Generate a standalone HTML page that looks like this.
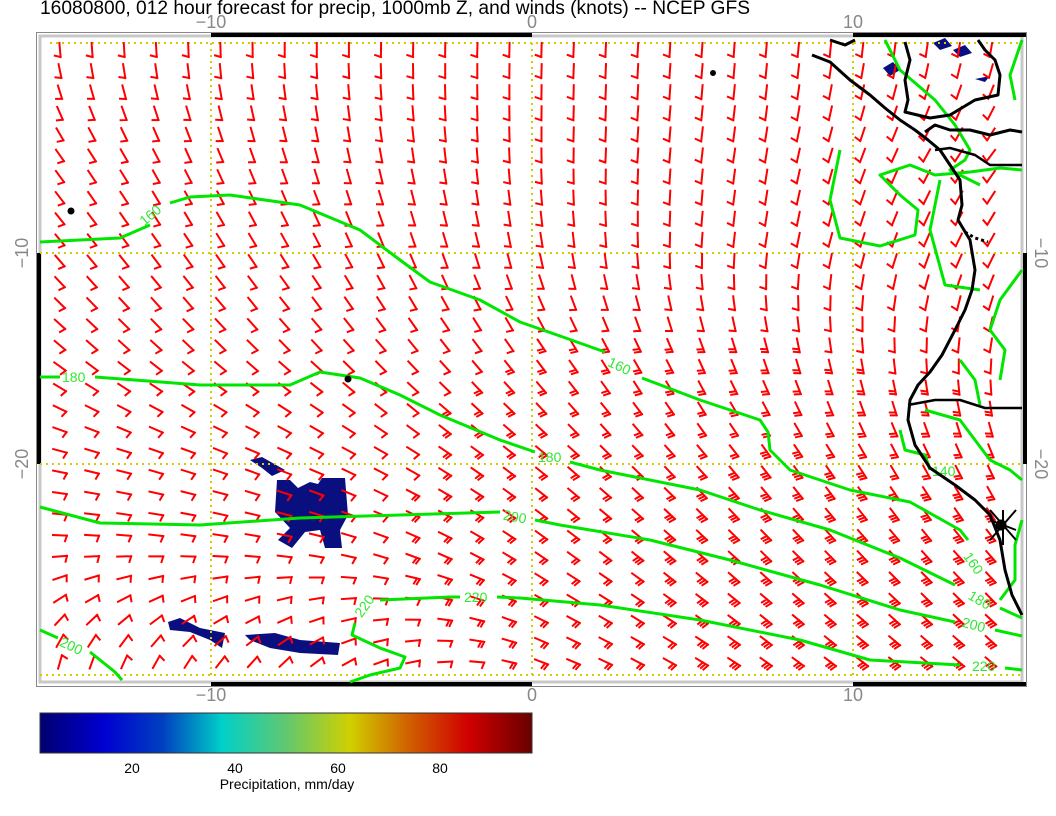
<!DOCTYPE html>
<html><head><meta charset="utf-8"><style>
html,body{margin:0;padding:0;background:#fff;width:1056px;height:816px;overflow:hidden}
svg{display:block}
text{font-family:"Liberation Sans",sans-serif}
</style></head><body>
<svg id="s" width="1056" height="816" viewBox="0 0 1056 816" xmlns="http://www.w3.org/2000/svg">
<defs>
<linearGradient id="cb" x1="0" x2="1" y1="0" y2="0">
<stop offset="0" stop-color="#000070"/>
<stop offset="0.13" stop-color="#0000d0"/>
<stop offset="0.25" stop-color="#0040c0"/>
<stop offset="0.37" stop-color="#00d0c8"/>
<stop offset="0.50" stop-color="#60c870"/>
<stop offset="0.63" stop-color="#d0d000"/>
<stop offset="0.75" stop-color="#d06000"/>
<stop offset="0.87" stop-color="#d00000"/>
<stop offset="1" stop-color="#680000"/>
</linearGradient>
</defs>
<text x="40" y="14" font-size="19" fill="#000" textLength="710" lengthAdjust="spacingAndGlyphs">16080800, 012 hour forecast for precip, 1000mb Z, and winds (knots) -- NCEP GFS</text>
<!-- frame -->
<rect x="36.5" y="32.5" width="990" height="654" fill="none" stroke="#888" stroke-width="1"/>
<rect x="40" y="36" width="982" height="646" fill="none" stroke="#c8c8c8" stroke-width="3"/>
<g fill="#000">
<rect x="211" y="33" width="321" height="4"/><rect x="853" y="33" width="173" height="4"/>
<rect x="211" y="682" width="321" height="4"/><rect x="853" y="682" width="173" height="4"/>
<rect x="37" y="253" width="4" height="211"/><rect x="1023" y="253" width="4" height="211"/>
</g>
<g fill="#888" font-size="18" text-anchor="middle">
<text x="211" y="28">−10</text><text x="532" y="28">0</text><text x="853" y="28">10</text>
<text x="211" y="701">−10</text><text x="532" y="701">0</text><text x="853" y="701">10</text>
<text transform="translate(28,253) rotate(-90)">−10</text>
<text transform="translate(28,464) rotate(-90)">−20</text>
<text transform="translate(1035,253) rotate(90)">−10</text>
<text transform="translate(1035,464) rotate(90)">−20</text>
</g>
<!-- precip -->
<g fill="#0a0f80">
<path d="M250,460 L262,457 L285,470 L272,476 L262,468 Z"/>
<path d="M277,480 L290,480 L298,488 L310,482 L318,484 L322,478 L345,478 L348,515 L340,530 L342,548 L325,548 L320,530 L305,532 L292,548 L278,540 L290,528 L275,512 Z"/>
<path d="M168,622 L180,618 L200,628 L225,633 L222,648 L210,640 L190,632 L170,630 Z"/>
<path d="M245,635 L275,633 L300,640 L340,643 L338,655 L300,653 L270,648 L250,640 Z"/>
<path d="M933,43 L945,38 L952,46 L940,50 Z"/><path d="M953,50 L965,45 L972,53 L960,57 Z"/>
<path d="M883,68 L893,62 L900,70 L890,76 Z"/><path d="M975,79 L990,76 L985,82 Z"/>
</g>
<!-- grid -->
<g stroke="#d4cc00" stroke-width="2" stroke-dasharray="2,4" fill="none">
<line x1="211" y1="43" x2="211" y2="675"/><line x1="532" y1="43" x2="532" y2="675"/><line x1="853" y1="43" x2="853" y2="675"/>
<line x1="50" y1="43" x2="1020" y2="43"/><line x1="40" y1="253" x2="1020" y2="253"/><line x1="40" y1="464" x2="1020" y2="464"/><line x1="40" y1="675" x2="1020" y2="675"/>
</g>
<g id="barbs" stroke="#ff0000" stroke-width="2" fill="none" stroke-linecap="square"></g>
<!-- contours -->
<g stroke="#00e600" stroke-width="3" fill="none" stroke-linejoin="round">
<path d="M40,242 L120,238 L150,225"/>
<path d="M170,203 L190,197 L230,195 L300,205 L360,230 L400,260 L430,282 L480,300 L520,322 L560,336 L605,352"/>
<path d="M642,378 L700,400 L760,420 L768,432 L770,450 L790,470 L850,490 L910,502 L960,530 L968,540"/>
<path d="M40,377 L60,377"/><path d="M95,377 L200,385 L290,385 L320,372 L360,378 L400,395 L440,415 L500,440 L535,452"/>
<path d="M570,462 L600,470 L700,490 L760,510 L830,530 L900,558 L955,585"/>
<path d="M1000,608 L1022,618"/>
<path d="M40,507 L100,523 L200,525 L300,518 L400,515 L500,512"/>
<path d="M535,520 L560,525 L650,540 L730,560 L820,585 L900,610 L955,622"/>
<path d="M995,630 L1022,636"/>
<path d="M380,600 L450,597 L460,597"/><path d="M497,597 L520,598 L600,605 L700,620 L800,640 L870,660 L960,665"/>
<path d="M1005,668 L1022,670"/>
<path d="M40,630 L58,638"/><path d="M90,652 L115,672 L122,680"/>
<path d="M355,623 L352,635 L380,648 L405,657 L400,668 L370,675 L350,682"/>
<path d="M885,40 L900,70 L935,100 L955,125 L970,150 L965,160 L950,170 L980,185"/>
<path d="M840,150 L830,200 L840,238 L880,246 L915,235 L918,210 L900,195 L880,175 L910,165 L935,175 L970,172 L1000,168 L1022,170"/>
<path d="M1022,40 L1010,75 L1015,100"/>
<path d="M940,180 L930,230 L945,285 L980,290"/>
<path d="M1022,270 L1000,300 L990,330 L1005,350 L1000,380"/>
<path d="M960,360 L975,380 L980,405"/>
<path d="M900,430 L905,450 L925,455 L930,470"/>
<path d="M925,410 L960,420 L975,440 L990,460 L1010,470 L1022,480"/>
<path d="M1022,520 L1015,545 L1015,580 L1000,600"/>
</g>
<g fill="#33e633" font-size="14">
<text x="140" y="222" transform="rotate(-40 148 218)">160</text>
<text x="608" y="372" transform="rotate(25 622 366)">160</text>
<text x="62" y="382">180</text>
<text x="538" y="462">180</text>
<text x="503" y="522" transform="rotate(10 517 518)">200</text>
<text x="464" y="602">220</text>
<text x="350" y="614" transform="rotate(-55 360 605)">220</text>
<text x="60" y="651" transform="rotate(25 72 645)">200</text>
<text x="932" y="476">140</text>
<text x="965" y="568" transform="rotate(55 975 560)">160</text>
<text x="968" y="605" transform="rotate(30 980 600)">180</text>
<text x="962" y="630" transform="rotate(15 975 625)">200</text>
<text x="972" y="671">220</text>
</g>
<!-- coast -->
<g stroke="#000" stroke-width="3" fill="none" stroke-linejoin="round">
<path d="M812,55 L830,62 L850,80 L870,95 L885,108 L900,120 L915,130 L928,140 L940,150 L950,165 L960,180 L962,205 L958,220 L970,240 L975,270 L972,290 L965,310 L955,330 L942,355 L930,372 L918,385 L910,400 L908,420 L915,445 L930,468 L955,485 L975,500 L990,515 L1000,540 L1005,570 L1012,595 L1022,615"/>
<path d="M830,40 L845,45 L855,40"/>
<path d="M905,42 L910,60 L905,80 L908,100 L905,112 L930,118 L950,115 L975,100 L998,95 L1000,75 L995,60 L985,50 L978,40"/>
<path d="M925,132 L935,125 L950,130 L970,130 L990,135 L1010,130 L1022,132"/>
<path d="M935,150 L950,148 L975,155 L990,165 L1022,165" stroke-width="2.5"/>
<path d="M908,405 L935,400 L960,400 L985,408 L1022,408" stroke-width="2.5"/>
<path d="M990,520 L1016,530 M1003,510 L1003,545 M990,510 L1016,540 M1016,510 L990,540" stroke-width="2"/>
<circle cx="1001" cy="525" r="4" fill="#000"/>
<circle cx="71" cy="211" r="2" fill="#000"/><circle cx="348" cy="379" r="2" fill="#000"/><circle cx="713" cy="73" r="1.5" fill="#000"/>
<path d="M965,232 L975,238 L988,242" stroke-dasharray="3,3"/>
</g>
<!-- colorbar -->
<rect x="40" y="713" width="492" height="40" fill="url(#cb)" stroke="#333" stroke-width="1"/>
<g font-size="14" fill="#000" text-anchor="middle">
<text x="132" y="773">20</text><text x="235" y="773">40</text><text x="338" y="773">60</text><text x="440" y="773">80</text>
<text x="287" y="789">Precipitation, mm/day</text>
</g>
</svg>
<script>
(function(){
var xs=[60,300,540,780,1010], ys=[50,150,250,350,450,550,670];
var A=[[85,90,92,95,100],[55,75,90,100,130],[50,60,80,100,120],[40,45,55,75,100],[15,25,40,55,70],[0,10,35,45,50],[-80,-45,20,35,40]];
var S=[[1,1,1,1,1],[1,1,1,1,1],[1,1,1,1,1],[1,1,1.6,1.6,1],[1,1,2,2.6,2],[1,1,2.2,3,3],[1,1,1.6,3,3]];
function interp(T,x,y){
 var i=0;while(i<xs.length-2&&x>xs[i+1])i++;
 var j=0;while(j<ys.length-2&&y>ys[j+1])j++;
 var tx=Math.max(0,Math.min(1,(x-xs[i])/(xs[i+1]-xs[i]))),ty=Math.max(0,Math.min(1,(y-ys[j])/(ys[j+1]-ys[j])));
 return (T[j][i]*(1-tx)+T[j][i+1]*tx)*(1-ty)+(T[j+1][i]*(1-tx)+T[j+1][i+1]*tx)*ty;
}
var g=document.getElementById('barbs'),d='';
for(var r=0;r<30;r++){for(var c=0;c<31;c++){
 var x=60+c*32.1,y=50+r*21.1;if(x>1012)continue;
 var a=interp(A,x,y)*Math.PI/180,n=Math.round(interp(S,x,y));
 var ux=Math.cos(a),uy=Math.sin(a),L=7;
 var ex=x+ux*L,ey=y+uy*L;
 d+='M'+(x-ux*L).toFixed(1)+','+(y-uy*L).toFixed(1)+'L'+ex.toFixed(1)+','+ey.toFixed(1);
 var tx=-uy*0.95-ux*0.3,ty=ux*0.95-uy*0.3;
 for(var k=0;k<n;k++){var bx=ex-ux*3*k,by=ey-uy*3*k;d+='M'+bx.toFixed(1)+','+by.toFixed(1)+'l'+(tx*6).toFixed(1)+','+(ty*6).toFixed(1);}
}}
var p=document.createElementNS('http://www.w3.org/2000/svg','path');p.setAttribute('d',d);g.appendChild(p);
})();
</script>
</body></html>
